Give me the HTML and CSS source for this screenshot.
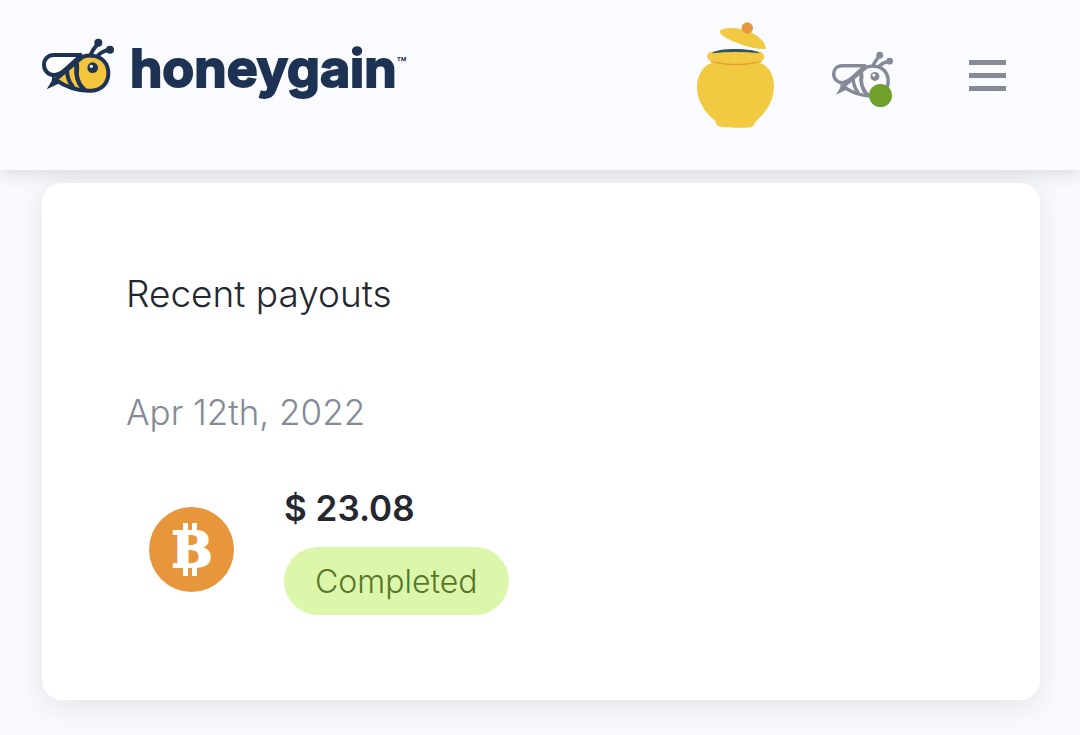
FILE: index.html
```html
<!DOCTYPE html>
<html lang="en">
<head>
<meta charset="utf-8">
<meta name="viewport" content="width=device-width, initial-scale=1">
<title>Honeygain</title>
<link rel="stylesheet" href="styles.css">
</head>
<body>
<svg class="sprite" aria-hidden="true">
  <symbol id="bee" viewBox="36 24 216 168">
    <path class="bee-wing" d="M152 75H72C53 75 42 88 42 104C42 122 55 136 75 135Q92 132 108 117L152 77Z"/>
    <path class="bee-body" d="M76 149L150 87C159 78 172 76 185 77C216 78 235 101 235 130C235 160 214 181 185 182C149 184 113 175 76 149Z"/>
    <path class="bee-line" d="M111 119Q111 149 128 169M140 97Q143 110 140 132Q143 162 165 180" />
    <path class="bee-line" d="M139 104Q134 151 160 178M181 76Q187 61 202 43M204 76Q216 64 238 59"/>
    <path class="bee-tail" d="M67 137L80 147L97 156L50 178L65 153Z"/>
    <circle class="bee-ink" cx="205" cy="38" r="12"/>
    <circle class="bee-ink" cx="240" cy="59" r="12"/>
    <circle class="bee-ink" cx="188" cy="113" r="16"/>
    <circle class="bee-glint" cx="184" cy="109" r="5"/>
  </symbol>
</svg>

<header class="header">
  <a class="brand" href="#">
    <svg class="brand-bee" aria-hidden="true"><use href="#bee"/></svg>
    <span class="brand-name">honeygain</span><span class="brand-mark">™</span>
  </a>
  <nav class="actions">
    <button class="icon-button" type="button" aria-label="Honey pot">
      <svg class="pot" viewBox="36 21 231 318" aria-hidden="true">
        <path fill="#f2ca42" d="M103 49C115 37 156 35 193 50C222 62 242 82 243 101C225 105 190 97 158 84C130 74 109 64 103 49Z"/>
        <circle fill="#e8973c" cx="187" cy="39" r="17"/>
        <path fill="#f2ca42" d="M82 143C53 150 36 183 36 216C36 254 56 290 88 315C93 318 91 325 97 331C103 338 123 338 153 338C183 338 199 338 205 332C211 325 211 319 217 314C248 288 267 252 267 213C267 178 249 149 221 143Z"/>
        <path fill="#f2ca42" d="M80 110Q152 99 224 110C241 113 242 136 225 140C180 152 125 152 80 139C61 134 62 113 80 110Z"/>
        <path fill="none" stroke="#e3a13a" stroke-width="4" stroke-linecap="round" d="M78 140Q152 158 227 140"/>
        <path fill="#34565c" d="M81 115C91 97 213 98 224 115Q153 107 81 115Z"/>
      </svg>
    </button>
    <button class="icon-button status" type="button" aria-label="Connection status: active">
      <svg class="status-bee" aria-hidden="true"><use href="#bee"/></svg>
      <span class="status-dot"></span>
    </button>
    <button class="icon-button menu" type="button" aria-label="Menu">
      <span class="menu-bar"></span><span class="menu-bar"></span><span class="menu-bar"></span>
    </button>
  </nav>
</header>

<main class="content">
  <section class="card">
    <h1 class="card-title">Recent payouts</h1>
    <time class="payout-date" datetime="2022-04-12">Apr 12th, 2022</time>
    <div class="payout">
      <svg class="coin" viewBox="0 0 85 85" role="img" aria-label="Bitcoin">
        <circle cx="42.5" cy="42.5" r="42.5" fill="#e8963b"/>
        <path fill="#fff" d="M34 16h5v10h-5zM43 16h5v10h-5zM34 58h5v11h-5zM43 58h5v11h-5z"/>
        <text class="coin-letter" x="43" y="60" text-anchor="middle">B</text>
      </svg>
      <div class="payout-info">
        <strong class="amount">$ 23.08</strong>
        <span class="badge">Completed</span>
      </div>
    </div>
  </section>
</main>
</body>
</html>
```

FILE: styles.css
```css
* {
  box-sizing: border-box;
}

body {
  margin: 0;
  min-height: 100vh;
  background: #f9fafd;
  color: #25282f;
  font-family: Inter, "Open Sans", sans-serif;
}

.sprite {
  position: absolute;
  width: 0;
  height: 0;
}

.header {
  display: flex;
  justify-content: space-between;
  align-items: center;
  padding: 22px 74px 42px 42px;
  background: #f9fbfe;
  box-shadow: 0 4px 16px rgba(35, 38, 60, 0.14);
}

.brand {
  display: flex;
  align-items: center;
  padding-bottom: 18px;
  color: #1e3354;
  text-decoration: none;
}

.brand-bee {
  width: 72px;
  height: 56px;
  margin-right: 16px;
  --ink: #1e3354;
  --wing: #fff;
  --body: #f2c53d;
}

.brand-name {
  padding-top: 6px;
  font: 700 52px/56px Inter, sans-serif;
  -webkit-text-stroke: 2px #1e3354;
}

.brand-mark {
  align-self: flex-start;
  padding-top: 18px;
  font: 600 16px/20px Inter, sans-serif;
}

.bee-wing {
  fill: var(--wing);
}

.bee-body {
  fill: var(--body);
}

.bee-line {
  fill: none;
}

.bee-wing,
.bee-body,
.bee-line {
  stroke: var(--ink);
  stroke-width: 12;
  stroke-linecap: round;
  stroke-linejoin: round;
}

.bee-tail,
.bee-ink {
  fill: var(--ink);
}

.bee-glint {
  fill: #fff;
}

.actions {
  display: flex;
  align-items: center;
}

.icon-button {
  display: block;
  padding: 0;
  border: 0;
  background: none;
  cursor: pointer;
}

.pot {
  display: block;
  width: 77px;
  height: 106px;
}

.status {
  position: relative;
  margin-left: 58px;
}

.status-bee {
  display: block;
  width: 61px;
  height: 48px;
  --ink: #858a96;
  --wing: none;
  --body: none;
}

.status-dot {
  position: absolute;
  right: 1px;
  bottom: -8px;
  width: 23px;
  height: 23px;
  border-radius: 50%;
  background: #719f2c;
}

.menu {
  display: grid;
  gap: 8px;
  width: 37px;
  margin-left: 76px;
}

.menu-bar {
  height: 5px;
  background: #858a96;
}

.content {
  padding: 13px 40px 35px 42px;
}

.card {
  position: relative;
  padding: 88px 84px 85px;
  border-radius: 20px;
  background: #fff;
  box-shadow: 0 6px 28px rgba(35, 38, 60, 0.1);
}

.card-title {
  margin: 0;
  font-size: 37px;
  font-weight: 300;
  line-height: 46px;
}

.payout-date {
  display: block;
  margin-top: 72px;
  color: #858a94;
  font-size: 35px;
  font-weight: 300;
  line-height: 46px;
}

.payout {
  display: flex;
  align-items: center;
  gap: 50px;
  margin-top: 48px;
  padding-left: 23px;
}

.coin {
  width: 85px;
  height: 85px;
}

.coin-letter {
  fill: #fff;
  stroke: #fff;
  stroke-width: 2px;
  font: 700 48px "DejaVu Serif", serif;
}

.payout-info {
  display: flex;
  flex-direction: column;
  align-items: flex-start;
  gap: 14px;
}

.amount {
  font-size: 35px;
  font-weight: 600;
  line-height: 50px;
}

.badge {
  padding: 15px 31px 13px;
  border-radius: 34px;
  background: #dcf7aa;
  color: #56772a;
  font-size: 32px;
  font-weight: 300;
  line-height: 40px;
}
```
